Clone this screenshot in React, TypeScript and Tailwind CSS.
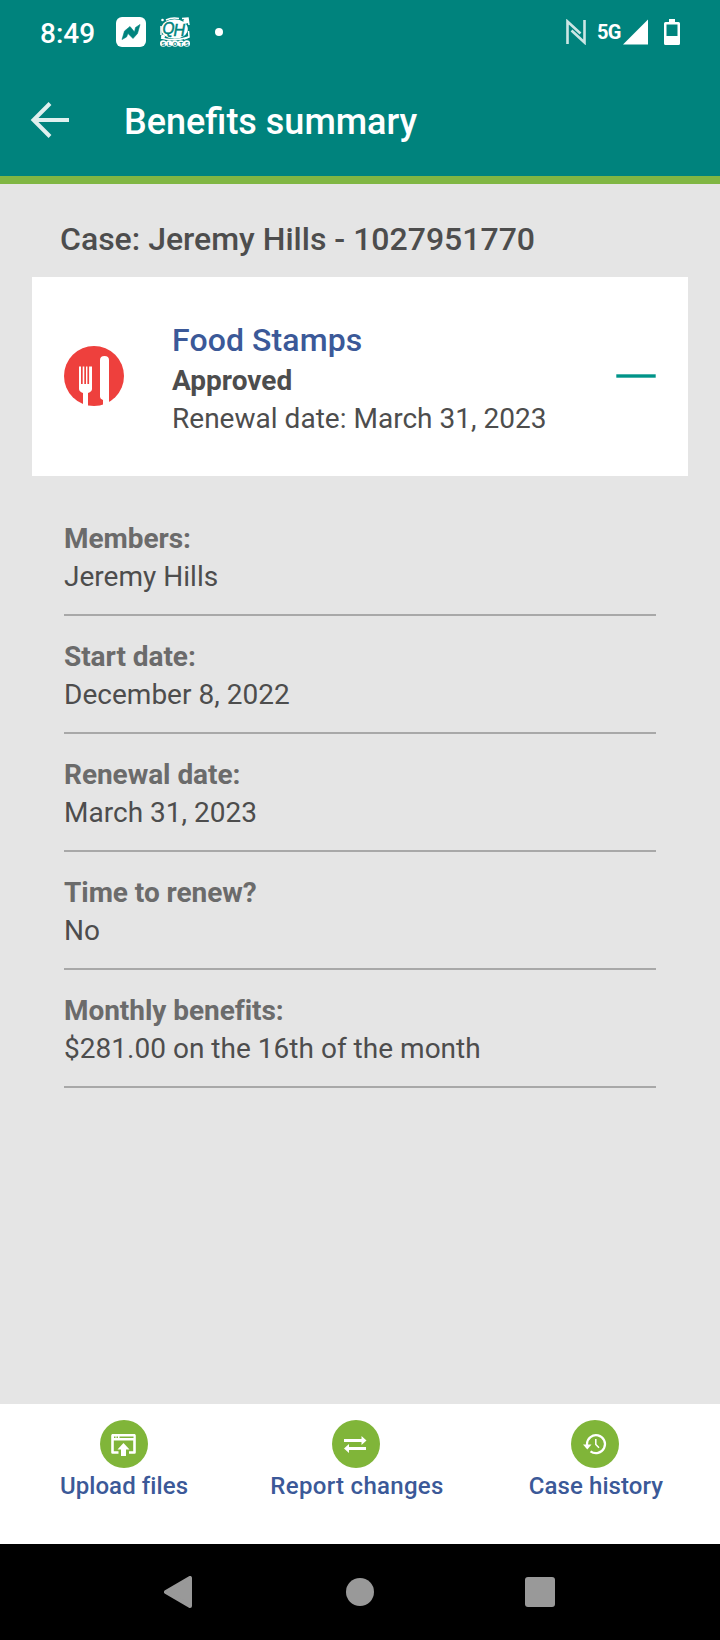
import React from "react";

const details = [
  { label: "Members:", value: "Jeremy Hills" },
  { label: "Start date:", value: "December 8, 2022" },
  { label: "Renewal date:", value: "March 31, 2023" },
  { label: "Time to renew?", value: "No" },
  { label: "Monthly benefits:", value: "$281.00 on the 16th of the month" },
];

function StatusBar() {
  return (
    <div className="flex h-16 items-center justify-between pr-10 pl-10">
      <div className="flex items-center">
        <span className="w-[76px] pt-[3px] text-[28px] leading-8 font-medium">8:49</span>
        <svg className="h-[30px] w-[30px]" viewBox="0 0 30 30">
          <rect width="30" height="30" rx="6" fill="#fff" />
          <path d="M6 22.500 8.500 14 14 9.500 18.500 15 19.500 10.500 24 7.500 21.500 16.500 17 21.500 12 16.500 10.500 20Z" fill="#00837d" stroke="#00837d" strokeWidth="0.6" strokeLinejoin="round" />
        </svg>
        <svg className="ml-[14px] h-[30px] w-[30px]" viewBox="0 0 30 30">
          <path d="M6 3Q12 0 19 1.500M22 1.500 28 1 29 8M1 9V18M28.500 14 29 20 24 22" fill="none" stroke="#fff" strokeWidth="1.500" />
          <circle cx="26" cy="4" r="2.600" fill="#fff" />
          <circle cx="3" cy="19.500" r="2" fill="#fff" />
          <circle cx="2.500" cy="3" r="1.300" fill="#fff" />
          <ellipse cx="14.500" cy="12" rx="13.300" ry="9.800" fill="#fff" />
          <path d="M1 21Q14 25 29 20" fill="none" stroke="#fff" strokeWidth="1.500" />
          <text x="2.500" y="16.500" fontFamily="Liberation Sans, sans-serif" fontStyle="italic" fontSize="17" textLength="12" lengthAdjust="spacingAndGlyphs" fill="#00837d" stroke="#00837d" strokeWidth="0.5">Q</text>
          <text x="13.500" y="19" fontFamily="Liberation Sans, sans-serif" fontStyle="italic" fontSize="17" textLength="11.500" lengthAdjust="spacingAndGlyphs" fill="#00837d" stroke="#00837d" strokeWidth="0.5">H</text>
          <g fill="#fff">
            <circle cx="3.200" cy="26.500" r="3.200" />
            <circle cx="9.100" cy="26.500" r="3.200" />
            <circle cx="15" cy="26.500" r="3.200" />
            <circle cx="20.900" cy="26.500" r="3.200" />
            <circle cx="26.800" cy="26.500" r="3.200" />
          </g>
          <text x="1.500 7.500 13.100 19.300 25.100" y="28.700" fontFamily="Roboto, sans-serif" fontWeight="700" fontSize="5.800" fill="#00837d">SLOTS</text>
        </svg>
        <span className="ml-[25px] h-2 w-2 rounded-full bg-white" />
      </div>
      <div className="flex items-center">
        <svg className="h-[26px] w-[20px]" viewBox="0 0 20 26" fill="none" stroke="#fff" strokeOpacity="0.8" strokeWidth="2.600">
          <path d="M1.500 25V2.500L14.500 14.500" />
          <path d="M18.500 1V23.500L5.500 11.500" />
        </svg>
        <span className="ml-[11px] w-[26px] text-[20px] leading-6 font-bold tracking-[-0.8px]">5G</span>
        <svg className="h-[26px] w-[25px]" viewBox="0 0 25 26">
          <path d="M0 25.500 25 0.500V25.500Z" fill="#fff" />
        </svg>
        <svg className="ml-4 h-[26px] w-4" viewBox="0 0 16 26">
          <path fillRule="evenodd" d="M5 0H11V3H14.500Q16 3 16 4.500V24.500Q16 26 14.500 26H1.500Q0 26 0 24.500V4.500Q0 3 1.500 3H5ZM2.500 5.500V17H13.500V5.500Z" fill="#fff" />
        </svg>
      </div>
    </div>
  );
}

function UtensilsIcon() {
  return (
    <svg className="mb-[2px] h-[60px] w-[60px]" viewBox="0 0 60 60">
      <circle cx="30" cy="30" r="30" fill="#ee403d" />
      <path d="M15 20.500H17V38H18.700V20.500H20.300V38H22V20.500H23.400V38H25.100V20.500H28V43Q28 45.500 24 47V60H19V47Q15 45.500 15 43Z" fill="#fff" />
      <path d="M36 14Q36 10 40.500 10 45 10 45 14V60H39V54Q36 53 36 51Z" fill="#fff" />
    </svg>
  );
}

function UploadIcon() {
  return (
    <svg className="h-12 w-12" viewBox="0 0 48 48">
      <circle cx="24" cy="24" r="24" fill="#80b539" />
      <path d="M18.500 32.500H12.500V15.500H34.500V32.500H29" fill="none" stroke="#fff" strokeWidth="2.600" strokeLinejoin="round" />
      <path d="M12 14H35V20.500H12Z" fill="#fff" />
      <path d="M14 17.300H15.500M16.500 17.300H18M19.500 17.300H33.500" stroke="#80b539" strokeWidth="1.500" />
      <path d="M23.500 23 29.500 29.500H26V36H21V29.500H17.500Z" fill="#fff" />
    </svg>
  );
}

function SwapIcon() {
  return (
    <svg className="h-12 w-12" viewBox="0 0 48 48">
      <circle cx="24" cy="24" r="24" fill="#80b539" />
      <path d="M12 19H29.500V16L34.500 20.500 29.500 25V22H12Z" fill="#fff" />
      <path d="M34 27H17V24L12 28.500 17 33V30H34Z" fill="#fff" />
    </svg>
  );
}

function HistoryIcon() {
  return (
    <svg className="h-12 w-12" viewBox="0 0 48 48">
      <circle cx="24" cy="24" r="24" fill="#80b539" />
      <path d="M16 25V24A9 9 0 1 1 19.500 31.300" fill="none" stroke="#fff" strokeWidth="2.200" />
      <path d="M12 24.500H20.500L16.300 29.500Z" fill="#fff" />
      <path d="M24.800 19V24.500L28 27.800" fill="none" stroke="#fff" strokeWidth="1.500" />
    </svg>
  );
}

export default function App() {
  return (
    <div className="flex h-[1640px] w-[720px] flex-col overflow-hidden bg-[#e5e5e5] font-[Roboto,sans-serif] text-[#4d4d4d]">
      <header className="h-[184px] shrink-0 border-b-8 border-[#80b643] bg-[#00837d] text-white">
        <StatusBar />
        <div className="flex h-28 items-center pl-[30px]">
          <svg className="h-9 w-10" viewBox="0 0 40 36" fill="none" stroke="#e0f0ef" strokeWidth="4">
            <path d="M39 18H4M20 1.500 3.500 18 20 34.500" />
          </svg>
          <h1 className="ml-[54px] pt-[3px] text-[36px] leading-[42px] font-medium">Benefits summary</h1>
        </div>
      </header>

      <main className="flex-1">
        <h2 className="h-[93px] pt-9 pl-[60px] text-[32px] leading-[38px] font-medium">Case: Jeremy Hills - 1027951770</h2>
        <section className="mx-8 flex h-[199px] items-center bg-white px-8">
          <UtensilsIcon />
          <div className="ml-12 flex-1 pt-1">
            <h3 className="text-[32px] leading-[42px] font-medium tracking-[0.1px] text-[#3b5998]">Food Stamps</h3>
            <p className="pt-px text-[28px] leading-[38px] font-bold">Approved</p>
            <p className="text-[28px] leading-[38px] tracking-[0.02px]">Renewal date: March 31, 2023</p>
          </div>
          <svg className="mb-[2px] h-1 w-10" viewBox="0 0 40 4">
            <rect x="0.300" y="0.300" width="39.400" height="3.400" fill="#009489" />
          </svg>
        </section>
        <dl className="mx-16 pt-[22px]">
          {details.map((item) => (
            <div key={item.label} className="h-[118px] border-b-2 border-[#a8a8a8] pt-[22px] text-[28px] leading-[38px]">
              <dt className="font-bold tracking-[-0.05px] text-[#6b6b6b]">{item.label}</dt>
              <dd className="tracking-[0.02px]">{item.value}</dd>
            </div>
          ))}
        </dl>
      </main>

      <nav className="grid h-[140px] shrink-0 grid-cols-[232px_232px_246px] bg-white pt-4 pl-2 text-[24px] leading-7 font-medium text-[#3b5998]">
        <button className="flex flex-col items-center gap-1 tracking-[0.08px]">
          <UploadIcon />
          Upload files
        </button>
        <button className="flex flex-col items-center gap-1 tracking-[0.3px]">
          <SwapIcon />
          <span className="pl-[2px]">Report changes</span>
        </button>
        <button className="flex flex-col items-center gap-1 tracking-[0.08px]">
          <HistoryIcon />
          <span className="pl-[2px]">Case history</span>
        </button>
      </nav>

      <footer className="flex h-24 shrink-0 items-center bg-black pl-[164px]">
        <svg className="h-8 w-7" viewBox="0 0 28 32">
          <path d="M26 2V30L2 16Z" fill="#999" stroke="#999" strokeWidth="4" strokeLinejoin="round" />
        </svg>
        <span className="ml-[154px] h-7 w-7 rounded-full bg-[#999]" />
        <span className="ml-[151px] h-[30px] w-[30px] rounded-[3px] bg-[#999]" />
      </footer>
    </div>
  );
}
